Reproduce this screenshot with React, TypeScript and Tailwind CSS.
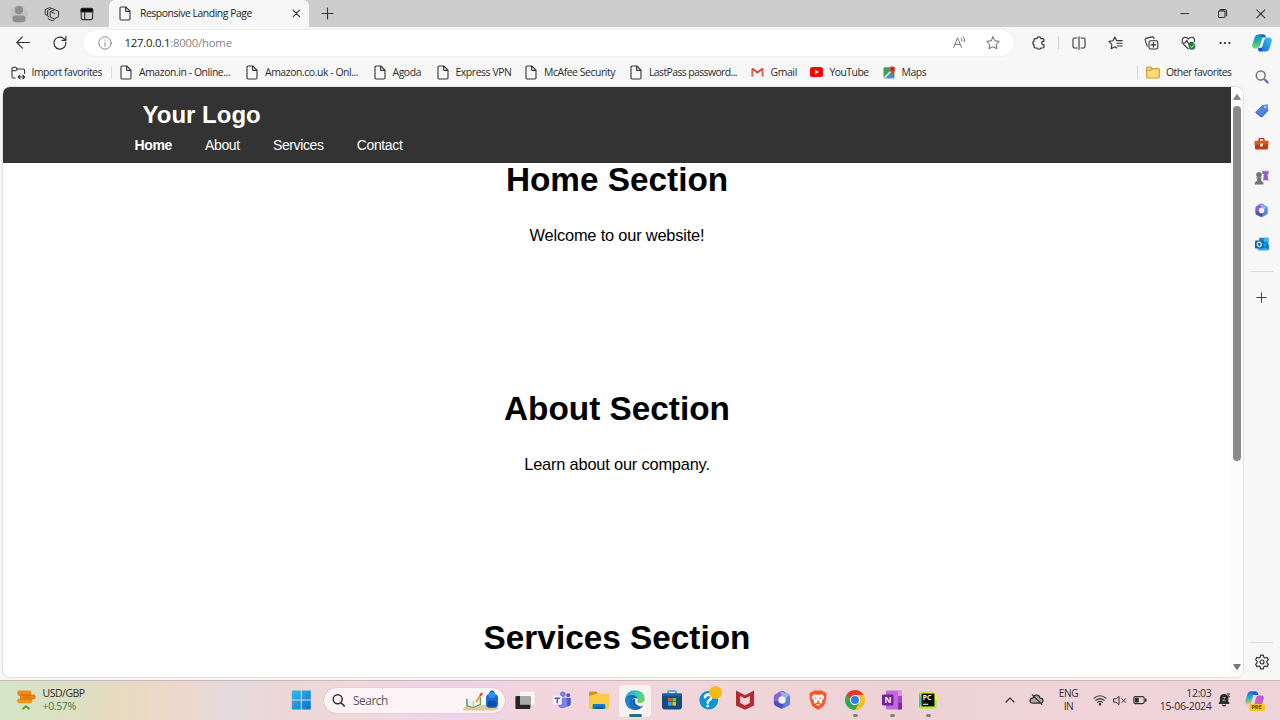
import type { ReactNode } from 'react';

type IconProps = { w?: number; h?: number; className?: string; children: ReactNode };

function Icon({ w = 16, h = 16, className = '', children }: IconProps) {
  return (
    <svg
      width={w}
      height={h}
      viewBox={`0 0 ${w} ${h}`}
      fill="none"
      stroke="#333"
      strokeWidth={1.1}
      strokeLinecap="round"
      strokeLinejoin="round"
      className={`block shrink-0 ${className}`}
    >
      {children}
    </svg>
  );
}

const PageIcon = () => (
  <Icon w={12} h={15}>
    <path d="M1 2.2Q1 1 2.2 1H6.8L11 5.2V12.8Q11 14 9.8 14H2.2Q1 14 1 12.8ZM6.6 1.2V4.4Q6.6 5.4 7.6 5.4H10.8" />
  </Icon>
);

function TabBar() {
  return (
    <div className="flex h-[27px] shrink-0 bg-[#cdcdcd]">
      <div className="flex w-[109px] items-center pl-[10px]">
        <Icon w={18} h={18}>
          <g stroke="none">
            <circle cx="9" cy="9" r="9" fill="#c5c3c1" />
            <circle cx="9" cy="5.2" r="4.1" fill="#918d8a" />
            <rect x="2.4" y="10.6" width="13.2" height="6.6" rx="3.3" fill="#918d8a" />
          </g>
        </Icon>
        <Icon className="ml-[16px]">
          <path strokeWidth="1" d="M6.5 5.5 11 3.6l3.6 1.7v5.4l-4.2 2.2-3.9-1.8ZM4.6 10.6 3.6 10V4.4l4.6-2 2 1M3 9.3 1.2 8.4V3.6L5.6 1.6l1.8.7M10 14l-1.8.7-4-1.9M6.8 5.7l3.6 1.7" />
        </Icon>
        <Icon w={14} h={14} className="ml-[20px]">
          <rect x="1.2" y="1.6" width="11.4" height="11" rx="1.6" />
          <path d="M1 5V2.6Q1 1.2 2.4 1.2H11.4Q12.8 1.2 12.8 2.6V5Z" fill="#000" />
          <path d="M4.7 5v7.4" />
        </Icon>
      </div>
      <div className="flex w-[200px] items-center rounded-t-[6px] bg-[#f7f7f7] pl-[10px]">
        <PageIcon />
        <span className="ml-[9px] w-[152px] whitespace-nowrap text-[10.4px] tracking-[-0.45px] text-[#222]">Responsive Landing Page</span>
        <Icon w={9} h={9}>
          <path d="M1.2 1.2l6.4 6.4M7.6 1.2 1.2 7.6" strokeWidth="1.2" />
        </Icon>
      </div>
      <Icon w={13} h={13} className="mt-[7px] ml-[12px]">
        <path d="M6.5 1v11M1 6.5h11" />
      </Icon>
      <div className="ml-auto flex items-center pr-[14px]">
        <Icon w={10} h={10}><path d="M.8 4.6h8" strokeWidth="1" /></Icon>
        <Icon w={10} h={10} className="ml-[28px]">
          <g transform="translate(-.6 -.7)">
            <rect x="1" y="2.6" width="6.6" height="6.6" rx="1.2" />
            <path d="M2.8 1.3H7.4Q9.2 1.3 9.2 3V7.4" />
          </g>
        </Icon>
        <Icon w={10} h={10} className="ml-[28px]"><path d="M.8.8l8 8M8.8.8l-8 8" /></Icon>
      </div>
    </div>
  );
}

const CopilotIcon = () => (
  <Icon w={20} h={18}>
    <defs>
      <linearGradient id="cpA" x1="0" y1="0" x2="0" y2="1">
        <stop offset="0" stopColor="#1b8fd0" />
        <stop offset=".5" stopColor="#22b6a6" />
        <stop offset="1" stopColor="#7bdc6a" />
      </linearGradient>
      <linearGradient id="cpB" x1="1" y1="0" x2="0" y2="1">
        <stop offset="0" stopColor="#38c6f4" />
        <stop offset="1" stopColor="#1a63dd" />
      </linearGradient>
    </defs>
    <g stroke="none">
      <path d="M6 .5h7Q10.9 1.4 10.2 4.4L8 12Q6.8 14.4 4.4 14.4H2.6Q-.6 14 .4 10.4L2.6 3.2Q3.4.8 6 .5Z" fill="url(#cpA)" />
      <path d="M6 .5h5.4Q13.6.7 14.2 3.6H10.4Q9.8 2 8.6 1.6Z" fill="#1767c4" />
      <path d="M14 17.5H7Q9.1 16.6 10 13.6L12.2 6Q13.4 3.6 15.6 3.6H17.4Q20.6 4 19.6 7.6L17.4 14.8Q16.6 17.2 14 17.5Z" fill="url(#cpB)" />
      <path d="M5.5 14.4Q6.2 17.4 8.6 17.5 9.9 16.6 10.6 13.2Z" fill="#1d4ed0" />
    </g>
  </Icon>
);

const Cell = ({ children }: { children: ReactNode }) => (
  <div className="flex w-[36.6px] shrink-0 items-center justify-center">{children}</div>
);

function Toolbar() {
  return (
    <div className="flex h-[31px] shrink-0 items-center bg-[#f7f7f7]">
      <Icon className="ml-[15px]"><path d="M14.6 7.5H2M7.4 1.9 1.8 7.5l5.6 5.6" /></Icon>
      <Icon className="ml-[21px]">
        <path d="M13.8 7.2A6 6 0 1 1 11.6 3.4L13.8 5.2M13.9 1.4V5.3H10" strokeWidth="1.2" />
      </Icon>
      <div className="ml-[15px] flex h-[26px] w-[933px] items-center rounded-full bg-white pl-[15px] shadow-[0_0_2px_rgba(0,0,0,0.12)]">
        <Icon w={14} h={14}>
          <g stroke="#888" strokeWidth="1"><circle cx="7" cy="7" r="6.2" /><path d="M7 6.4v3.8M7 3.9v.3" /></g>
        </Icon>
        <span className="ml-[12.5px] whitespace-nowrap text-[11.4px] tracking-[-0.25px] text-[#222]">127.0.0.1<span className="text-[#858585]">:8000/home</span></span>
        <div className="ml-auto flex items-center pr-[14px]">
          <Icon w={15} h={14}>
            <g stroke="#777" strokeWidth="1"><path d="M1.6 11.6 5.6 1.8l4 9.8M3 8.4h5.2M8.8 2Q10.4 3.2 10 5.2M11 .6Q13.4 2.6 12.4 6" /></g>
          </Icon>
          <Icon w={14} h={14} className="ml-[19px]">
            <path stroke="#666" strokeWidth="1" d="M7 .9 8.9 4.8 13.3 5.4 10.1 8.4 10.9 12.8 7 10.7 3.1 12.8 3.9 8.4.7 5.4 5.1 4.8Z" />
          </Icon>
        </div>
      </div>
      <div className="ml-[6px] flex items-center">
        <Cell>
          <Icon w={14} h={14}>
            <path strokeWidth="1.2" d="M3 2.6H5Q5 .9 6.9.9T8.8 2.6H10.8Q12 2.6 12 3.8V5.2Q9.8 5.2 9.8 7T12 8.8V10.8Q12 12 10.8 12H8.8Q8.8 13.2 6.9 13.2T5 12H3.2Q2 12 2 10.8V8.8Q.8 8.6.8 7T2 5.2V3.8Q2 2.6 3 2.6Z" />
          </Icon>
        </Cell>
        <div className="mr-[1.5px] ml-[1px] h-[13px] w-px bg-[#cfcfcf]" />
        <Cell>
          <Icon w={14} h={14}><path d="M5 2H2.4Q1 2 1 3.4V10.6Q1 12 2.4 12H5M9 2h2.6Q13 2 13 3.4v7.2Q13 12 11.6 12H9M7 .8v12.4" /></Icon>
        </Cell>
        <Cell>
          <Icon w={15} h={14}>
            <path d="M8.6 4.6 6.8 1 5 4.8.9 5.4 3.9 8.4 3.2 12.8 6.8 10.8M9.4 4.6h4.8M8.8 7.3h5.4M9.4 10h4.8M8.6 4.6l.6.1M6.8 10.8l2 1.2" />
          </Icon>
        </Cell>
        <Cell>
          <Icon w={15} h={14}>
            <rect x="5" y="4.8" width="8.8" height="8.2" rx="1.8" />
            <path d="M9.4 6.6v4.6M7.1 8.9h4.6M3.2 10.2 1.2 4.2Q.8 2.8 2 2.4L7.8.9Q9.2.6 9.6 1.8L10 2.6" />
          </Icon>
        </Cell>
        <Cell>
          <Icon w={15} h={14}>
            <path d="M1.4 5.8Q.4 2.6 3 1.4 5.6.6 7.4 3 9.2.6 11.8 1.4 14.4 2.6 13.4 5.8M2.4 8.2 7.2 12.8M.8 7H4L5.8 4.2 8 8.8 9.4 6.6H12" />
            <circle cx="11" cy="10.4" r="3.3" fill="#19843a" stroke="none" />
            <path d="M9.6 10.5l1 1 1.9-2" stroke="#fff" strokeWidth=".9" />
          </Icon>
        </Cell>
        <Cell>
          <Icon w={12} h={4}><g fill="#222" stroke="none"><circle cx="1.6" cy="2" r="1.1" /><circle cx="6" cy="2" r="1.1" /><circle cx="10.4" cy="2" r="1.1" /></g></Icon>
        </Cell>
        <Cell><CopilotIcon /></Cell>
      </div>
    </div>
  );
}

const pageBookmarks = [
  { label: 'Amazon.in - Online...', cls: 'w-[126px]' },
  { label: 'Amazon.co.uk - Onl...', cls: 'w-[127.5px]' },
  { label: 'Agoda', cls: 'w-[63px]' },
  { label: 'Express VPN', cls: 'w-[88.5px]' },
  { label: 'McAfee Security', cls: 'w-[105px]' },
  { label: 'LastPass password...', cls: 'w-[120.5px] tracking-[-0.58px]' },
];

function Bookmarks() {
  return (
    <div className="flex h-[29px] shrink-0 items-center whitespace-nowrap text-[10.4px] tracking-[-0.42px] text-[#2b2b2b]">
      <Icon w={15} h={14} className="ml-[11px]">
        <path d="M4.2 12H2.4Q1 12 1 10.6V2.6Q1 1.2 2.4 1.2H4.6L6.4 3H12Q13.6 3 13.6 4.6V7.4M1.2 4.8H4.8L6.4 3M7.2 11H13.6M9 9.2 7.2 11l1.8 1.8M11.8 9.2 13.6 11l-1.8 1.8" />
      </Icon>
      <span className="ml-[5.5px] w-[79px] tracking-[-0.46px]">Import favorites</span>
      <div className="mr-[8.5px] h-[13px] w-px bg-[#ddd]" />
      {pageBookmarks.map((b) => (
        <div key={b.label} className={`flex shrink-0 items-center ${b.cls}`}>
          <PageIcon />
          <span className="ml-[7px]">{b.label}</span>
        </div>
      ))}
      <div className="flex w-[59px] shrink-0 items-center">
        <Icon w={13} h={10}>
          <g fill="none" strokeWidth="2" strokeLinecap="butt" strokeLinejoin="miter">
            <path d="M1.4 9.6V1.4" stroke="#d8655e" /><path d="M11.6 9.6V1.4" stroke="#d8655e" /><path d="M1.4 1.6 6.5 5.6 11.6 1.6" stroke="#dc4b40" />
          </g>
        </Icon>
        <span className="ml-[7px] tracking-[-0.36px]">Gmail</span>
      </div>
      <div className="flex w-[73px] shrink-0 items-center">
        <Icon w={13} h={10}><rect width="13" height="10" rx="2.6" fill="#f00" stroke="none" /><path d="M5.2 2.8v4.4L9 5Z" fill="#fff" stroke="none" /></Icon>
        <span className="ml-[7px] tracking-[-0.52px]">YouTube</span>
      </div>
      <div className="flex items-center">
        <Icon w={13} h={13}>
          <g stroke="none">
            <rect x=".5" y="1.2" width="11" height="11" rx="1" fill="#35a45b" />
            <path d="M1 12.2 6.2 6.4 11.5 12.2Z" fill="#4788ee" />
            <path d="M.6 11.6 7.4 4.4l1.2 1.4-6.4 6.4Z" fill="#e8e5df" />
            <path d="M8.8 8.8Q8.8 6.8 7.2 5.6 5.6 3.6 6.4 1.9 7.2.2 9.2.2t2.9 1.6Q13 3.6 11.4 5.6 9.8 7 9.6 8.8Z" fill="#dc4438" />
            <circle cx="9.3" cy="3.2" r="1.1" fill="#831c18" />
          </g>
        </Icon>
        <span className="ml-[6px]">Maps</span>
      </div>
      <div className="mr-[12px] ml-auto flex items-center">
        <div className="mr-[8px] h-[13px] w-px bg-[#d6d6d6]" />
        <Icon w={14} h={13}>
          <path d="M.7 2Q.7 1 1.7 1H4.6L6.2 2.6H12.2Q13.3 2.6 13.3 3.7V11Q13.3 12 12.2 12H1.8Q.7 12 .7 11Z" fill="#ffdc78" stroke="#c79a2c" />
          <path d="M1 4.2H4.8L6.2 2.6" stroke="#c79a2c" />
        </Icon>
        <span className="ml-[6px] w-[66px] tracking-[-0.5px]">Other favorites</span>
      </div>
    </div>
  );
}

const sections = [
  { title: 'Home Section', text: 'Welcome to our website!' },
  { title: 'About Section', text: 'Learn about our company.' },
  { title: 'Services Section', text: '' },
];

function WebPage() {
  return (
    <div className="ml-[3px] flex h-[590px] w-[1240px] shrink-0 overflow-hidden rounded-[7px] bg-white font-['Liberation_Sans',Arial,sans-serif] shadow-[0_0_2px_rgba(0,0,0,0.3)]">
      <div className="w-[1228px] shrink-0">
        <header className="h-[76px] bg-[#333] text-white">
          <div className="pt-[12.5px] pl-[139.5px] text-[24px] leading-[29px] font-bold">Your Logo</div>
          <nav className="flex gap-[33.2px] pt-[8px] pl-[131.5px] text-[14px] leading-[16px] tracking-[-0.38px]">
            <a className="font-bold">Home</a>
            <a>About</a>
            <a>Services</a>
            <a>Contact</a>
          </nav>
        </header>
        {sections.map((s) => (
          <section key={s.title} className="h-[229px] text-center text-black">
            <h1 className="text-[33.35px] leading-[34px] font-bold">{s.title}</h1>
            {s.text && <p className="pt-[28px] text-[16.4px] leading-[20px] tracking-[-0.19px]">{s.text}</p>}
          </section>
        ))}
      </div>
      <div className="flex flex-1 flex-col items-center justify-between bg-[#fcfcfc] py-[6px]">
        <Icon w={8} h={8}><path d="M4 1.6.8 6.4h6.4Z" fill="#8a8a8a" stroke="#8a8a8a" /></Icon>
        <div className="mt-[5px] mb-auto h-[355px] w-[8px] rounded-full bg-[#8a8a8a]" />
        <Icon w={8} h={8}><path d="M4 6.4.8 1.6h6.4Z" fill="#7a7a7a" stroke="#7a7a7a" /></Icon>
      </div>
    </div>
  );
}

const SideCell = ({ children }: { children: ReactNode }) => (
  <div className="flex h-[33.4px] shrink-0 items-center justify-center">{children}</div>
);

const LoopIcon = ({ big = false }: { big?: boolean }) => (
  <svg width={big ? 20 : 15} height={big ? 20 : 15} viewBox="0 0 20 20" className="block shrink-0" fill="none" strokeLinejoin="round">
    <path d="M10 3.2 15.6 6.2V13.2L10 16.6" stroke="#82a9ea" strokeWidth="4.8" />
    <path d="M15.8 5.8V13.4L9.6 16.8" stroke="#5d83dc" strokeWidth="4.4" />
    <path d="M10.8 16.9 4.3 13.6V8" stroke="#4d50bd" strokeWidth="4.8" />
    <path d="M4.3 11V6.5L9.6 3.2 12 4.4" stroke="#8d64d2" strokeWidth="4.8" />
    <path d="M8.4.9 17.4 5.6 14.2 8.4 9.4 5.6Z" fill="#86b7ee" />
    <circle cx="10" cy="10" r="3.6" fill="#f7eff5" />
  </svg>
);

function SideBar() {
  return (
    <aside className="flex flex-1 flex-col bg-[#f7f7f7] pt-[2.6px] pr-[1px]">
      <SideCell>
        <Icon w={14} h={14}><circle cx="5.7" cy="5.5" r="4.4" stroke="#777" strokeWidth="1.5" /><path d="M9 8.8l1 1" stroke="#777" strokeWidth="1.7" /><path d="M10.6 10.4l2 2" stroke="#8d62cf" strokeWidth="2.4" /></Icon>
      </SideCell>
      <SideCell>
        <Icon w={14} h={14}><path d="M.8 7.4 7 1.2 12.8.3 13 6.2 7.2 12.3Q6.2 13 5.4 12.2L.9 8.6Q.4 8 .8 7.4Z" fill="#5385dd" stroke="none" /><path d="M1 8.6l4.6 3.8q.8.6 1.6-.1L13 6.2" stroke="#3562bd" /><circle cx="10.3" cy="3.1" r="1" fill="#e8f1ff" stroke="none" /></Icon>
      </SideCell>
      <SideCell>
        <Icon w={15} h={12}><path d="M5 3V1.4Q5 .7 5.8.7H9.2Q10 .7 10 1.4V3" stroke="#93391e" strokeWidth="1.3" /><rect x=".5" y="2.8" width="14" height="4.6" rx="1" fill="#df562b" stroke="none" /><path d="M1 6.6H14V10.6Q14 11.6 13 11.6H2Q1 11.6 1 10.6Z" fill="#c23c12" stroke="none" /><rect x="6.2" y="5.4" width="2.6" height="3" rx=".6" fill="#fff" stroke="none" /></Icon>
      </SideCell>
      <SideCell>
        <Icon w={15} h={15}>
          <g stroke="none">
            <path d="M8.2.5h1.4v1h1.2v-1h1.4v1h1.2v-1h1.2V3.4l-1 1 .4 4.4 1 1.4H8.4l1-1.4.4-4.4-1.6-1Z" fill="#9160c6" />
            <circle cx="5" cy="4.8" r="2.8" fill="#737373" /><path d="M2.4 7.2h5.2v1.4H6.8L7.4 11l2 1.4v2H.8v-2L2.8 11l.6-2.4h-1Z" fill="#737373" />
          </g>
        </Icon>
      </SideCell>
      <SideCell><LoopIcon /></SideCell>
      <SideCell>
        <Icon w={14} h={14}><g stroke="none"><rect x="4" y=".8" width="9.4" height="8" rx="1" fill="#1688d8" /><rect x="8.8" y=".8" width="4.6" height="4" fill="#35b8f1" /><path d="M3 6.4 13.8 8v4.4Q13.8 13.4 12.8 13.4H4Q3 13.4 3 12.4Z" fill="#2ea9ec" /><path d="M8 10l5.8-3v5Z" fill="#1475c4" /><rect y="3.4" width="8.6" height="8" rx="1" fill="#0964b8" /></g><ellipse cx="4.3" cy="7.4" rx="2" ry="2.2" stroke="#fff" strokeWidth="1.2" /></Icon>
      </SideCell>
      <div className="mx-auto mt-[10px] h-px w-[23px] shrink-0 bg-[#dcdcdc]" />
      <div className="mt-[20px] flex justify-center"><Icon w={11} h={11}><path d="M5.5.8v9.4M.8 5.5h9.4" strokeWidth="1" stroke="#444" /></Icon></div>
      <div className="mx-auto mt-auto h-px w-[23px] shrink-0 bg-[#dcdcdc]" />
      <div className="mt-[10.5px] mb-[10.5px] flex justify-center">
        <Icon w={16} h={16}>
          <path strokeWidth="1.2" d="M6.7 1.2H9.3L9.8 3.2 11.1 4 13.1 3.4 14.4 5.7 12.9 7.2V8.8L14.4 10.3 13.1 12.6 11.1 12 9.8 12.8 9.3 14.8H6.7L6.2 12.8 4.9 12 2.9 12.6 1.6 10.3 3.1 8.8V7.2L1.6 5.7 2.9 3.4 4.9 4 6.2 3.2Z" />
          <circle cx="8" cy="8" r="2" strokeWidth="1.2" />
        </Icon>
      </div>
    </aside>
  );
}

const AppCell = ({ mark, active = false, children }: { mark?: boolean; active?: boolean; children: ReactNode }) => (
  <div className="flex h-full w-[36.67px] shrink-0 justify-center">
    <div className={`relative flex h-[32px] w-[32px] items-center justify-center rounded-[4px] pb-[2px] ${active ? 'bg-[#faf1f1]' : ''}`}>
      {children}
      {active && <div className="absolute bottom-0 left-[10px] h-[3px] w-[13px] rounded-full bg-[#1d7088]" />}
      {mark && <div className="absolute bottom-0 left-[14px] h-[3px] w-[5px] rounded-full bg-[#8b7e80]" />}
    </div>
  </div>
);

function PinnedApps() {
  return (
    <div className="flex h-full pt-[4px]">
      <AppCell>
        <Icon w={20} h={20}><g stroke="none"><rect x="5" y="1.4" width="14.6" height="13.4" rx="1" fill="#f5f5f5" /><rect x=".4" y="6" width="15" height="13" rx="1" fill="#262626" /><rect x="5" y="6" width="10.4" height="8.8" fill="#a9a9a9" /></g></Icon>
      </AppCell>
      <AppCell>
        <Icon w={20} h={18}><g stroke="none"><circle cx="16.2" cy="4.2" r="2" fill="#5059c9" /><path d="M13 7h5.8v5.2q-.3 3.2-3.6 3.2H13Z" fill="#5059c9" /><circle cx="10.8" cy="3.2" r="2.8" fill="#7880e2" /><path d="M5.8 6.8h9.4v5.6q-.4 4.8-4.8 4.8t-4.6-4.8Z" fill="#7b83eb" /><rect x=".8" y="4.8" width="9" height="9" rx="1" fill="#f5f2ff" /></g><path d="M3 7.2h4.6M5.3 7.2v4.6" stroke="#4c50b5" strokeWidth="1.4" /></Icon>
      </AppCell>
      <AppCell>
        <Icon w={20} h={20}><g stroke="none"><path d="M0 3Q0 1.4 1.6 1.4H7L9.2 3.6V8H0Z" fill="#d49817" /><path d="M0 6.2 8.6 3.6H18.6Q20 3.6 20 5V17.6Q20 19 18.6 19H1.4Q0 19 0 17.6Z" fill="#fbcb45" /><path d="M3.6 19V15.4Q3.6 14 5 14H15Q16.4 14 16.4 15.4V19Z" fill="#147bca" /><rect x="6.4" y="16.8" width="7.4" height="2.2" fill="#0d579f" /></g></Icon>
      </AppCell>
      <AppCell active>
        <Icon w={20} h={20}>
          <defs>
            <linearGradient id="edA" x1="0" y1="0" x2="1" y2=".4"><stop offset="0" stopColor="#1ca4dc" /><stop offset=".6" stopColor="#37c8b8" /><stop offset="1" stopColor="#6bd554" /></linearGradient>
          </defs>
          <g stroke="none">
            <path d="M.2 9.6Q.8.3 10 .2 19.4.6 19.8 8.6 19.6 13 15 13 11.6 12.8 12 11.2 13.6 7.8 9.4 6.8 4.6 6.4.2 11.6Z" fill="url(#edA)" />
            <path d="M.2 9.6Q2 5 7.4 5 12.6 5.6 13 10 12 7.6 9.4 8 6 9.6 7.2 13.4 9.4 18.4 15.8 16.4 17.4 15.6 18 16 14.4 20.6 8.8 19.8.4 18 .2 9.6Z" fill="#1668b8" />
            <path d="M.8 7.6Q3.6 6 6.4 8.2 3.6 11.4 5.2 15.4 6.2 18.6 9.6 19.8 1.6 19.4.3 11.4Z" fill="#1c84d4" />
            <path d="M9.4 8.2Q6.2 10 7.2 13.4 9.4 18.4 15.8 16.4 12 15.8 10.4 13.6 9.6 12.2 10.4 10.6Z" fill="#1460a8" />
            <path d="M12.6 8.6Q13.4 10 12 11.4 11.8 13 15 13 13 14.6 11 12.6 9.2 10 12.6 8.6Z" fill="#f6f1f1" />
          </g>
        </Icon>
      </AppCell>
      <AppCell>
        <Icon w={20} h={20}><path d="M6 4V1.8Q6 1 6.8 1h6.4Q14 1 14 1.8V4" stroke="#29a4dd" strokeWidth="1.5" /><g stroke="none"><path d="M0 4.6Q0 3.6 1 3.6H19Q20 3.6 20 4.6V16.6Q20 19.4 17.2 19.4H2.8Q0 19.4 0 16.6Z" fill="#164b82" /><path d="M0 4.6Q0 3.6 1 3.6H19Q20 3.6 20 4.6V6H0Z" fill="#1c649d" /><path d="M6 8h3.7v3.5H6Z" fill="#f1512b" /><path d="M10.4 8H14v3.5h-3.6Z" fill="#7fc02f" /><path d="M6 12.1h3.7v3.5H6Z" fill="#2cabe8" /><path d="M10.4 12.1H14v3.5h-3.6Z" fill="#ffbd16" /></g></Icon>
      </AppCell>
      <AppCell>
        <Icon w={20} h={20}><circle cx="9.8" cy="10.2" r="9.4" fill="#0c94d3" stroke="none" /><path d="M6 7.2Q6.6 4.4 9.6 4.6 12.8 5 12.4 7.8 12 9.4 9.8 10.4 8.8 11.2 8.8 12.6M8.7 15.8v.2" stroke="#fff" strokeWidth="2.6" /></Icon>
        <div className="absolute top-[1px] right-[3px] h-[13px] w-[13px] rounded-full bg-[#fdb913]" />
      </AppCell>
      <AppCell>
        <Icon w={18} h={20}><path d="M0 .6 9 5.2 18 .6V15.4L9 19.8 0 15.4ZM4.2 6V13L9 15.4 13.8 13V6L9 8.6Z" fill="#b7282f" fillRule="evenodd" stroke="none" /></Icon>
      </AppCell>
      <AppCell><LoopIcon big /></AppCell>
      <AppCell>
        <Icon w={18} h={20}><g stroke="none"><path d="M4.8.4H13.2L14.8 2.2 16.4 2 17.8 4.4 17.2 6 17.4 8 15.2 15.2Q14 17 9 19.8 4 17 2.8 15.2L.6 8 .8 6 .2 4.4 1.6 2 3.2 2.2Z" fill="#fb5428" /><path d="M4.6 4.2 9 5 13.4 4.2 15.4 7.4 13 10.8 13.4 12.6 11 14.2 9 16 7 14.2 4.6 12.6 5 10.8 2.6 7.4Z" fill="#fff" /><path d="M4.6 7.2 7.6 8l-.4 1.4ZM13.4 7.2 10.4 8l.4 1.4ZM9 9.4l1 2.4L9 12.8 8 11.8ZM6 13.2 9 12.2l3 1-3 1.4Z" fill="#fb5428" /></g></Icon>
      </AppCell>
      <AppCell mark>
        <Icon w={20} h={20}><g stroke="none"><path d="M10 10 1.34 5A10 10 0 0 1 18.66 5Z" fill="#e33b2e" /><path d="M10 10V5H18.66A10 10 0 0 1 10 20Z" fill="#fbc116" /><path d="M10 20A10 10 0 0 1 1.34 5L5.67 12.5Q7 15 10 15L14.33 12.5Z" fill="#2da94f" /><path d="M1.34 5 5.67 12.5 10 10V5Z" fill="#e33b2e" /><path d="M1.34 5 5.67 12.5 7 9Z" fill="#2da94f" /><circle cx="10" cy="10" r="5" fill="#fff" /><circle cx="10" cy="10" r="4" fill="#347de8" /></g></Icon>
      </AppCell>
      <AppCell mark>
        <Icon w={20} h={20}><g stroke="none"><rect x="4" y=".4" width="16" height="19.2" rx="1.4" fill="#c168dd" /><path d="M16 .4h2.6Q20 .4 20 1.8V6H16Z" fill="#d893eb" /><path d="M16 6h4v6.6h-4Z" fill="#a844ca" /><path d="M16 12.6h4v5.6q0 1.4-1.4 1.4H16Z" fill="#8427a8" /><rect y="4.6" width="11.4" height="11" rx="1" fill="#7420a1" /></g><text x="2.6" y="13.2" fontSize="8.5" fontWeight="700" fill="#fff" stroke="none" fontFamily="Open Sans, sans-serif">N</text></Icon>
      </AppCell>
      <AppCell mark>
        <Icon w={18} h={18}><g stroke="none"><path d="M0 1 12 0 18 4 17.4 17.4 8 18 .4 17.6Z" fill="#a9ec3d" /><path d="M8 0 18 3.4V10Z" fill="#f0f443" /><path d="M0 1.4 3.6 10 0 17Z" fill="#27d48b" /><rect x="2.6" y="2.6" width="12.8" height="12.8" fill="#080808" /></g><text x="3.7" y="9.4" fontSize="6.8" fontWeight="700" fill="#fff" stroke="none" fontFamily="Open Sans, sans-serif">PC</text><path d="M4.4 13.3h4.4" stroke="#fff" /></Icon>
      </AppCell>
    </div>
  );
}

function Taskbar() {
  return (
    <footer className="flex h-[40px] shrink-0 items-stretch border-t border-[#c9b9ba] bg-[linear-gradient(90deg,#d5e5c8_0px,#dce0c3_60px,#e8dac1_130px,#edd8cf_190px,#e3dadf_232px,#ecd7d7_285px,#efd9dc_360px,#edd3ea_450px,#f3d5de_530px,#f0d6da_700px,#edd2d5_900px,#f0d4d9_1100px,#eed3d9_1280px)] text-[10.5px] text-[#302d2d]">
      <div className="flex w-[291px] pt-[6px] pl-[17px]">
        <Icon w={19} h={21} className="mt-[3px]">
          <g stroke="none"><rect x=".4" y=".6" width="14" height="4.6" rx="1.8" fill="#f08c15" /><rect x="3" y="4.4" width="15.6" height="4.8" rx="1.8" fill="#ed8110" /><rect x=".2" y="8.6" width="15" height="4.6" rx="1.8" fill="#f19518" /><path d="M1.4 5.2H14M3.4 9H15" stroke="#bf6309" strokeWidth=".7" /></g>
          <path d="M6.2 18.6 9 16.2l2.8 2.4" stroke="#57a51d" strokeWidth="2" />
        </Icon>
        <div className="ml-[6.5px] whitespace-nowrap leading-[13px] tracking-[-0.5px]"><div>USD/GBP</div><div className="tracking-[-0.35px] text-[#38803a]">+0.57%</div></div>
      </div>
      <Icon w={21} h={20} className="mt-[9px]">
        <defs><linearGradient id="winA" x1="0" y1="0" x2="1" y2="1"><stop offset="0" stopColor="#35bced" /><stop offset="1" stopColor="#0872c7" /></linearGradient></defs>
        <path d="M.8.4H9.8V9.5H.8ZM10.8.4H19.8V9.5H10.8ZM.8 10.5H9.8V19.6H.8ZM10.8 10.5H19.8V19.6H10.8Z" fill="url(#winA)" stroke="none" />
      </Icon>
      <div className="mt-[7px] ml-[11.5px] flex h-[25px] w-[181.5px] items-center rounded-full bg-[#fcf3f6] pl-[8.5px] shadow-[0_0_1px_rgba(120,60,80,0.45)]">
        <Icon w={13} h={13}><circle cx="5.7" cy="5.3" r="4.5" strokeWidth="1.5" /><path d="M9 8.7l3.2 3.2" strokeWidth="1.6" /></Icon>
        <span className="ml-[8px] text-[11.8px] tracking-[-0.42px] text-[#555]">Search</span>
        <Icon w={38} h={21} className="mr-[5px] ml-auto">
          <g stroke="none">
            <path d="M1 18.5Q4 15 13 15.8 28 13 36 17 38 20 32 20.4H8Q1 21 1 18.5Z" fill="#e4c69a" />
            <path d="M4 8.4 11 11 19 7V14.8L11.4 18 4.4 16.6Z" fill="#5c9981" /><path d="M5.4 7.6 11.2 10 17.8 6.4v7.6l-6.4 3-5.4-1.6Z" fill="#f2f3e7" />
            <rect x="24" y="4" width="12" height="14" rx="4" fill="#186bd7" /><rect x="26.4" y="2" width="7" height="6" rx="3" fill="#2e91ee" /><rect x="25.6" y="11" width="8.8" height="5.6" rx="1.4" fill="#0c4aae" />
          </g>
          <path d="M28 2.2Q30 .2 32 2.2" stroke="#174eaa" /><path d="M14.6 11.2 19.4 4" stroke="#ee9d2b" strokeWidth="2" /><path d="M18.8 4.8l.8-1.2" stroke="#e54444" strokeWidth="2.2" />
          <path d="M11.3 11.4v5" stroke="#86ab9a" strokeWidth=".7" />
        </Icon>
      </div>
      <div className="ml-[1.9px]"><PinnedApps /></div>
      <div className="ml-auto flex items-start whitespace-nowrap leading-[13px]">
        <Icon w={10} h={8} className="mt-[15px]"><path d="M1 6 5 2l4 4" strokeWidth="1.2" /></Icon>
        <Icon w={15} h={13} className="mt-[12px] ml-[14px]"><path d="M4 10.2Q1 10.2 1 7.6 1.2 5.2 4 5.2 4.6 2.4 7.4 2.2T11.2 5.2Q14 5.2 14 7.8 13.8 10.2 11.4 10.2ZM3.4 2l9.4 9.4" fill="#b5a3a6" strokeWidth="1.2" /></Icon>
        <div className="mt-[6px] ml-[14px] w-[22px] text-center text-[10.2px] tracking-[-0.4px]"><div>ENG</div><div>IN</div></div>
        <Icon w={14} h={12} className="mt-[13px] ml-[13px]"><path d="M1 4.2Q7-.8 13 4.2M2.8 6.4Q7 2.8 11.2 6.4M4.6 8.4Q7 6.4 9.4 8.4" /><circle cx="7" cy="10.2" r=".7" fill="#222" /></Icon>
        <Icon w={14} h={11} className="mt-[14px] ml-[6px]"><path d="M1 3.8H3.2L6 1.4V9.6L3.2 7.2H1ZM8.8 3.6l3.8 3.8M12.6 3.6 8.8 7.4" strokeWidth="1" /></Icon>
        <Icon w={14} h={10} className="mt-[14px] ml-[6px]"><rect x=".8" y="1.6" width="10.4" height="7" rx="1.6" /><path d="M2.4 3.2h2.8v3.8H2.4Z" fill="#222" /><path d="M12.8 4v2.2" strokeWidth="1.5" /></Icon>
        <div className="mt-[6px] ml-[12px] w-[53px] text-right tracking-[-0.3px]"><div>12:03</div><div className="flex justify-end">15-06-2024</div></div>
        <Icon w={13} h={14} className="mt-[12px] ml-[6px]"><path d="M1.2 10.4 2.4 8.6V5Q2.6 1.6 6 1.6 9.6 1.6 9.8 5V8.6L11 10.4ZM4.6 12.2Q6 13.6 7.6 12.2" fill="#222" /><path d="M9.2.9h2.4L9.2 3.8h2.6" stroke="#222" strokeWidth=".9" /><path d="M4.8 4.6h2.6L4.8 7.8h2.6" stroke="#d8c0c4" strokeWidth=".8" /></Icon>
        <div className="relative mt-[10px] mr-[15.5px] ml-[14px]">
          <Icon w={20} h={20}>
            <defs><linearGradient id="preA" x1="0" y1="0" x2="0" y2="1"><stop offset="0" stopColor="#2569e3" /><stop offset=".5" stopColor="#20b5d7" /><stop offset="1" stopColor="#dcce3b" /></linearGradient><linearGradient id="preB" x1="1" y1="0" x2="0" y2="1"><stop offset="0" stopColor="#a95ae8" /><stop offset="1" stopColor="#f56a91" /></linearGradient></defs>
            <g stroke="none"><path d="M5 .5H11Q9 1.2 8 4.8L6.4 11Q5.6 13.4 3.6 13.4H2Q-.2 13 .6 9.8L2.4 3Q3 .8 5 .5Z" fill="url(#preA)" /><path d="M5 .5h6q2 .3 2.4 3.6H9Z" fill="#235bdb" /><path d="M12.6 17H6.6Q8.6 16.2 9.6 12.6L11 6.8Q11.8 4.4 13.8 4.4H16.4Q19.4 4.8 18.6 8L16.8 14.6Q16 16.8 12.6 17Z" fill="url(#preB)" /></g>
          </Icon>
          <div className="absolute top-[13px] left-[4px] flex h-[7px] w-[16px] items-center justify-center rounded-[2px] bg-[#f9c516] text-[5.5px] leading-[7px] font-bold text-[#4a3504]">PRE</div>
        </div>
      </div>
    </footer>
  );
}

export default function App() {
  return (
    <div className="flex h-[720px] w-[1280px] flex-col overflow-hidden bg-[#f7f7f7] font-['Open_Sans','Noto_Sans',sans-serif]">
      <TabBar />
      <Toolbar />
      <div className="flex h-[622px] shrink-0">
        <main className="flex w-[1244px] shrink-0 flex-col">
          <Bookmarks />
          <WebPage />
        </main>
        <SideBar />
      </div>
      <Taskbar />
    </div>
  );
}
